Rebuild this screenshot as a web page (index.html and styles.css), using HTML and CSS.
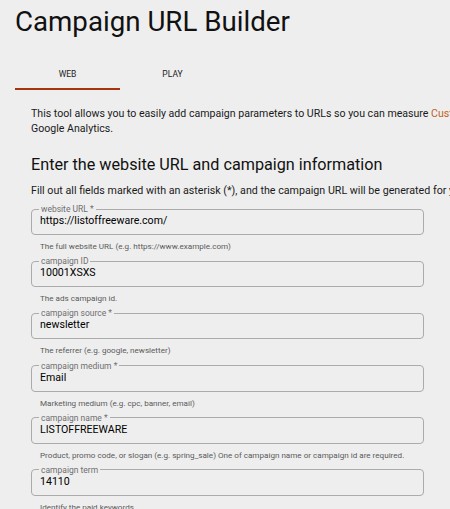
FILE: index.html
```html
<!DOCTYPE html>
<html lang="en">
<head>
<meta charset="utf-8">
<title>Campaign URL Builder</title>
<link rel="stylesheet" href="styles.css">
</head>
<body>
<div class="page">
  <h1 class="title">Campaign URL Builder</h1>
  <div class="tabs">
    <div class="tab tab-active">WEB</div>
    <div class="tab">PLAY</div>
  </div>
  <div class="content">
    <p class="intro">This tool allows you to easily add campaign parameters to URLs so you can measure <a class="link" href="#">Custom Campaigns</a> in Google Analytics.</p>
    <h2 class="heading">Enter the website URL and campaign information</h2>
    <p class="lead">Fill out all fields marked with an asterisk (*), and the campaign URL will be generated for you.</p>

    <div class="field">
      <fieldset class="box"><legend class="label">website URL *</legend><div class="value">https://listoffreeware.com/</div></fieldset>
      <div class="help">The full website URL (e.g. https://www.example.com)</div>
    </div>
    <div class="field">
      <fieldset class="box"><legend class="label">campaign ID</legend><div class="value">10001XSXS</div></fieldset>
      <div class="help">The ads campaign id.</div>
    </div>
    <div class="field">
      <fieldset class="box"><legend class="label">campaign source *</legend><div class="value">newsletter</div></fieldset>
      <div class="help">The referrer (e.g. google, newsletter)</div>
    </div>
    <div class="field">
      <fieldset class="box"><legend class="label">campaign medium *</legend><div class="value">Email</div></fieldset>
      <div class="help">Marketing medium (e.g. cpc, banner, email)</div>
    </div>
    <div class="field">
      <fieldset class="box"><legend class="label">campaign name *</legend><div class="value">LISTOFFREEWARE</div></fieldset>
      <div class="help">Product, promo code, or slogan (e.g. spring_sale) One of campaign name or campaign id are required.</div>
    </div>
    <div class="field">
      <fieldset class="box"><legend class="label">campaign term</legend><div class="value">14110</div></fieldset>
      <div class="help">Identify the paid keywords</div>
    </div>
  </div>
</div>
</body>
</html>
```
FILE: styles.css
```css
html, body {
  margin: 0;
  overflow: hidden;
}
body {
  background: #eeeeee;
  font-family: Roboto, "Liberation Sans", sans-serif;
  color: #212121;
}
.page {
  padding: 0 15px;
}
.title {
  margin: 4px 0 0;
  font-size: 27.7px;
  line-height: 36px;
  font-weight: 400;
  color: #111;
  white-space: nowrap;
}
.tabs {
  display: flex;
  margin-top: 20px;
}
.tab {
  width: 105px;
  height: 30px;
  box-sizing: border-box;
  line-height: 28px;
  text-align: center;
  font-size: 8.5px;
  color: #222;
  border-bottom: 2px solid transparent;
}
.tab-active {
  border-bottom-color: #a8330f;
}
.content {
  padding-left: 16px;
}
.intro {
  margin: 16px 0 0;
  width: 530px;
  font-size: 10.6px;
  line-height: 15px;
  color: #1a1a1a;
}
.link {
  color: #c0601a;
  text-decoration: none;
}
.heading {
  margin: 17px 0 0;
  font-size: 16.2px;
  line-height: 24px;
  font-weight: 400;
  color: #111;
  white-space: nowrap;
}
.lead {
  margin: 6px 0 0;
  font-size: 10.7px;
  line-height: 15px;
  color: #1a1a1a;
  white-space: nowrap;
}
.field {
  width: 393px;
  margin-top: 6px;
}
.field + .field {
  margin-top: 5.2px;
}
.box {
  margin: 0;
  padding: 0 8px 6px;
  border: 1px solid #ababab;
  border-radius: 4px;
  min-width: 0;
}
.label {
  padding: 0 2px;
  margin-left: -1px;
  font-size: 8.5px;
  line-height: 10px;
  color: #6e6e6e;
}
.value {
  font-size: 10.6px;
  line-height: 14px;
  color: #000;
}
.help {
  margin-top: 6px;
  padding-left: 9px;
  font-size: 8.1px;
  line-height: 10px;
  color: #5a5a5a;
  white-space: nowrap;
}
```
